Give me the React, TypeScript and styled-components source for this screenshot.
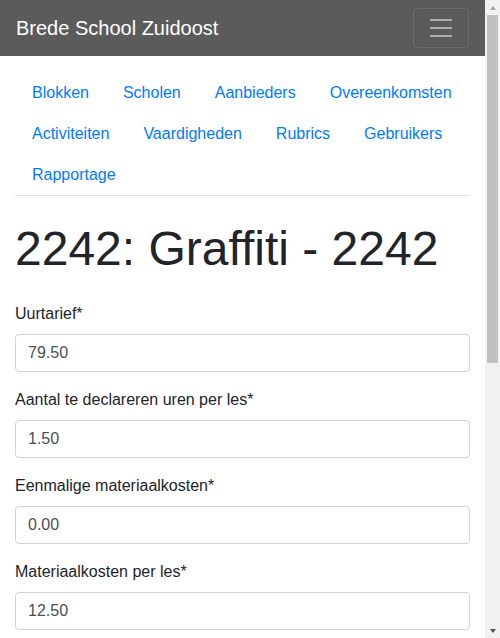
import React from "react";
import styled, { createGlobalStyle } from "styled-components";

const GlobalStyle = createGlobalStyle`
  *, *::before, *::after { box-sizing: border-box; }
  body {
    margin: 0;
    font-family: "Liberation Sans", Arial, sans-serif;
    font-size: 16px;
    line-height: 1.5;
    color: #212529;
    background: #fff;
  }
`;

const Root = styled.div`
  display: flex;
  align-items: flex-start;
`;

const Page = styled.div`
  flex: 1;
  min-width: 0;
`;

/* Drawing of the browser's vertical scrollbar */
const ScrollBar = styled.div`
  position: sticky;
  top: 0;
  width: 15px;
  height: 100vh;
  flex-shrink: 0;
  background: #f1f1f1;
  display: flex;
  flex-direction: column;
`;

const ScrollButton = styled.div`
  height: 15px;
  display: flex;
  align-items: center;
  justify-content: center;
`;

const Arrow = styled.span<{ $dir: "up" | "down" }>`
  width: 0;
  height: 0;
  border-left: 3.5px solid transparent;
  border-right: 3.5px solid transparent;
  ${(p) =>
    p.$dir === "up"
      ? "border-bottom: 4px solid #a3a3a3;"
      : "border-top: 4px solid #505050;"}
`;

const Track = styled.div`
  flex: 1;
  padding: 0 2px;
`;

const Thumb = styled.div`
  height: 348px;
  background: #c1c1c1;
`;

const Navbar = styled.nav`
  display: flex;
  align-items: center;
  justify-content: space-between;
  padding: 8px 16px;
  background: #5b5b5b;
`;

const Brand = styled.a`
  font-size: 20px;
  line-height: 30px;
  padding: 5px 0;
  color: #fff;
  text-decoration: none;
`;

const Toggler = styled.button`
  width: 56px;
  height: 40px;
  padding: 4px 12px;
  background: transparent;
  border: 1px solid rgba(255, 255, 255, 0.1);
  border-radius: 4px;
  display: flex;
  align-items: center;
  justify-content: center;
`;

const Container = styled.main`
  padding: 0 15px;
`;

const Nav = styled.ul`
  list-style: none;
  margin: 16px 0 0;
  padding: 0;
  display: flex;
  flex-wrap: wrap;
  border-bottom: 1px solid #dee2e6;
`;

const NavLink = styled.a`
  display: block;
  padding: 8.5px 17px;
  color: #007bff;
  text-decoration: none;
  line-height: 24px;
`;

const Title = styled.h1`
  font-size: 48px;
  font-weight: 400;
  line-height: 1.2;
  margin: 24px 0 24px;
`;

const FormGroup = styled.div`
  margin-bottom: 16px;
`;

const Label = styled.label`
  display: block;
  margin-bottom: 8px;
  line-height: 24px;
`;

const Input = styled.input`
  display: block;
  width: 100%;
  height: 38px;
  padding: 6px 12px;
  font-family: inherit;
  font-size: 16px;
  line-height: 1.5;
  color: #495057;
  background: #fff;
  border: 1px solid #ced4da;
  border-radius: 4px;
`;

const SubmitButton = styled.button`
  font-family: inherit;
  font-size: 16px;
  line-height: 1.5;
  padding: 6px 12px;
  color: #fff;
  background: #007bff;
  border: 1px solid #007bff;
  border-radius: 4px;
  margin-bottom: 24px;
`;

const links = [
  "Blokken",
  "Scholen",
  "Aanbieders",
  "Overeenkomsten",
  "Activiteiten",
  "Vaardigheden",
  "Rubrics",
  "Gebruikers",
  "Rapportage",
];

const fields: [string, string][] = [
  ["Uurtarief*", "79.50"],
  ["Aantal te declareren uren per les*", "1.50"],
  ["Eenmalige materiaalkosten*", "0.00"],
  ["Materiaalkosten per les*", "12.50"],
  ["Aantal lessen*", "10"],
  ["Minimum aantal deelnemers*", "8"],
  ["Maximum aantal deelnemers*", "15"],
  ["Reiskosten*", "0.00"],
];

export default function App() {
  return (
    <>
      <GlobalStyle />
      <Root>
        <Page>
          <Navbar>
            <Brand href="#">Brede School Zuidoost</Brand>
            <Toggler aria-label="Menu">
              <svg width="30" height="30" viewBox="0 0 30 30">
                <path
                  d="M4 7h22M4 15h22M4 23h22"
                  stroke="rgba(255,255,255,0.5)"
                  strokeWidth="2"
                  strokeLinecap="butt"
                />
              </svg>
            </Toggler>
          </Navbar>
          <Container>
            <Nav>
              {links.map((l) => (
                <li key={l}>
                  <NavLink href="#">{l}</NavLink>
                </li>
              ))}
            </Nav>
            <Title>2242: Graffiti - 2242</Title>
            <form>
              {fields.map(([label, value]) => (
                <FormGroup key={label}>
                  <Label>{label}</Label>
                  <Input type="text" defaultValue={value} />
                </FormGroup>
              ))}
              <SubmitButton type="button">Opslaan</SubmitButton>
            </form>
          </Container>
        </Page>
        <ScrollBar aria-hidden>
          <ScrollButton>
            <Arrow $dir="up" />
          </ScrollButton>
          <Track>
            <Thumb />
          </Track>
          <ScrollButton>
            <Arrow $dir="down" />
          </ScrollButton>
        </ScrollBar>
      </Root>
    </>
  );
}
